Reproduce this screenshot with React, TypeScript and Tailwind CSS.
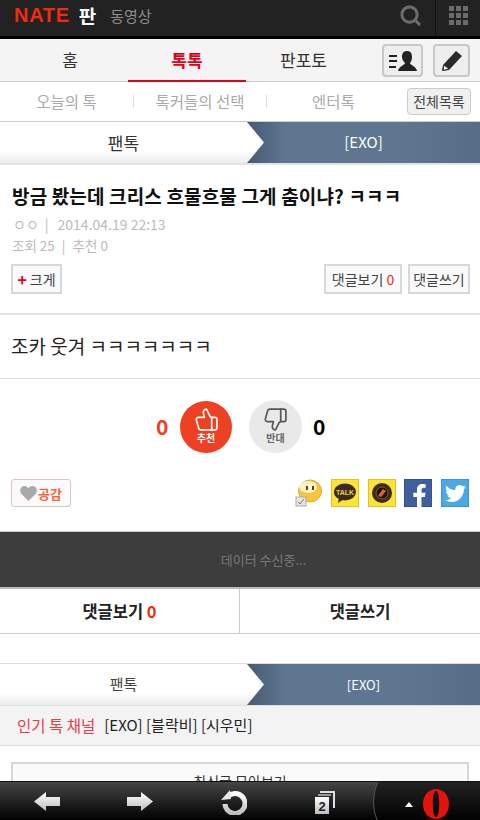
import { ThumbsUp, ThumbsDown, Search } from "lucide-react";
import { FaFacebookF, FaTwitter } from "react-icons/fa";

function Crumb({ big }: { big?: boolean }) {
  return (
    <div className="h-[41px] bg-[linear-gradient(90deg,#465a72_247px,#5f7691_285px,#5f7691_400px,#566c87_480px)] relative flex">
      <div className="w-[264px] pr-[17px] flex items-center justify-center bg-[linear-gradient(180deg,#ffffff_70%,#ececec_100%)] [clip-path:polygon(0_0,247px_0,264px_50%,247px_100%,0_100%)]">
        <span className={big ? "text-[17px] text-[#333]" : "text-[15px] text-[#444]"}>팬톡</span>
      </div>
      <div className="flex-1 flex items-center justify-center">
        <span className={big ? "text-[15px] text-white -ml-[17px]" : "text-[13px] text-white -ml-[17px]"}>[EXO]</span>
      </div>
    </div>
  );
}

function SmallBtn({ children, className }: { children: React.ReactNode; className: string }) {
  return (
    <div className={`h-[30px] border-2 border-[#d8d8d8] bg-[#fafafa] flex items-center justify-center text-[14px] text-[#444] ${className}`}>
      {children}
    </div>
  );
}

function Sep() {
  return <span className="w-px h-[13px] bg-[#dddddd]" />;
}

export default function App() {
  return (
    <div className="relative w-[480px] h-[820px] overflow-hidden bg-white font-['Noto_Sans_CJK_KR','Noto_Sans',sans-serif]">
      <header className="h-[39px] bg-[#222222] border-b-[3px] border-black flex items-center pb-[6px]">
        <span className="ml-[14px] font-['Liberation_Sans',sans-serif] font-bold text-[20px] leading-none tracking-[0.7px] text-[#f02b10]">NATE</span>
        <span className="ml-[9px] text-[19px] font-bold text-white leading-none">판</span>
        <span className="ml-[14px] text-[15px] text-[#8e8e8e] leading-none">동영상</span>
        <Search className="ml-auto mr-[13px] text-[#6b6b6b]" size={23} strokeWidth={3.2} />
        <div className="self-stretch -mb-[6px] w-px bg-[#111]" />
        <div className="ml-[13px] mr-[12px] grid grid-cols-3 gap-[2px]">
          {Array.from({ length: 9 }).map((_, i) => (
            <span key={i} className="w-[5px] h-[5px] bg-[#6b6b6b]" />
          ))}
        </div>
      </header>

      <nav className="h-[43px] bg-[#f4f4f4] border-b border-[#cccccc] flex items-stretch pl-[12px] relative">
        <div className="w-[116px] flex items-center justify-center text-[17px] text-[#333]">홈</div>
        <div className="w-[118px] flex items-center justify-center text-[17px] font-bold text-[#e60012] border-b-[2px] border-[#e60012] -mb-px">톡톡</div>
        <div className="w-[115px] flex items-center justify-center text-[17px] text-[#333]">판포토</div>
        <div className="ml-[21px] mt-[5px] w-[41px] h-[33px] rounded-[4px] border-2 border-[#c8c8c8] bg-[#eeeeee] flex items-center justify-center">
          <svg width="30" height="22" viewBox="0 0 30 22">
            <path d="M1 5h8v2H1zM1 10h8v2H1zM1 16h7v2H1z" fill="#222" />
            <path d="M19 1c4 0 5 3 5 6 0 3-1 5-2 6 0 2 6 3 7 8H10c1-5 7-6 7-8-1-1-3-3-3-6 0-3 1-6 5-6z" fill="#222" />
          </svg>
        </div>
        <div className="ml-[10px] mt-[5px] w-[37px] h-[33px] rounded-[4px] border-2 border-[#c8c8c8] bg-[#eeeeee] flex items-center justify-center">
          <svg width="24" height="24" viewBox="0 0 24 24">
            <path d="M16 2l6 5-13 14-7 1 1-6z" fill="#2a2a2a" />
            <path d="M4 16l5 4-6 1.500z" fill="#ffffff" stroke="#2a2a2a" strokeWidth="1" />
          </svg>
        </div>
      </nav>

      <div className="h-[40px] border-b border-[#cccccc] flex items-center text-[15.5px] text-[#aaaaaa] relative">
        <div className="w-[133px] text-center">오늘의 톡</div>
        <Sep />
        <div className="w-[132px] text-center">톡커들의 선택</div>
        <Sep />
        <div className="w-[133px] text-center">엔터톡</div>
        <div className="ml-[7px] w-[64px] h-[27px] rounded-[4px] border border-[#cccccc] bg-[#f0f0f0] flex items-center justify-center text-[14px] text-[#444]">전체목록</div>
      </div>

      <Crumb big />
      <div className="h-[2px] bg-[#e4e4e4]" />

      <section className="h-[150px] border-b-2 border-[#e2e2e2] px-[11px] pt-[18px]">
        <h1 className="ml-px text-[19px] leading-[26px] font-bold tracking-[0.15px] text-[#111] whitespace-nowrap">방금 봤는데 크리스 흐물흐물 그게 춤이냐? ㅋㅋㅋ</h1>
        <div className="mt-[4px] h-[22px] flex items-center text-[14px] text-[#bbbbbb]">
          <span className="ml-[2px]">ㅇㅇ</span>
          <span className="ml-[6px]">|</span>
          <span className="ml-[9px]">2014.04.19 22:13</span>
        </div>
        <div className="h-[21px] flex items-center text-[13.5px] text-[#bbbbbb]">
          <span className="ml-px">조회 25</span>
          <span className="ml-[7px]">|</span>
          <span className="ml-[7px]">추천 0</span>
        </div>
        <div className="mt-[8px] flex">
          <SmallBtn className="w-[51px]">
            <span className="text-[#e60012] font-bold text-[16px] leading-none mr-[3px]">+</span>크게
          </SmallBtn>
          <SmallBtn className="ml-auto w-[78px]">
            댓글보기&nbsp;<span className="text-[#f02b10]">0</span>
          </SmallBtn>
          <SmallBtn className="ml-[6px] w-[62px] mr-[-1px]">댓글쓰기</SmallBtn>
        </div>
      </section>

      <section className="h-[64px] border-b border-[#dddddd] px-[11px] flex items-center text-[19px] text-[#222]">
        조카 웃겨 ㅋㅋㅋㅋㅋㅋㅋ
      </section>

      <section className="h-[153px] border-b border-[#cccccc] px-[11px] pt-[21px]">
        <div className="flex items-center h-[53px]">
          <span className="ml-[145px] w-[24px] text-[21px] font-bold text-[#f0401f]">0</span>
          <div className="w-[52px] h-[52px] rounded-full bg-[#ee4023] flex flex-col items-center justify-center text-white">
            <ThumbsUp size={25} strokeWidth={1.6} className="-scale-x-100 -mt-[2px]" />
            <span className="text-[10px] font-bold leading-[12px]">추천</span>
          </div>
          <div className="ml-[17px] w-[53px] h-[53px] rounded-full bg-[#e9e9e9] flex flex-col items-center justify-center text-[#555]">
            <ThumbsDown size={25} strokeWidth={1.6} className="-mt-[2px]" />
            <span className="text-[10px] font-bold leading-[12px] text-[#666]">반대</span>
          </div>
          <span className="ml-[11px] text-[21px] font-bold text-black">0</span>
        </div>
        <div className="mt-[26px] flex items-center">
          <div className="w-[60px] h-[28px] rounded-[3px] border border-[#dcc6bd] bg-[#fafafa] flex items-center justify-center gap-[1px]">
            <svg width="17" height="15" viewBox="0 0 17 15">
              <path d="M8.500 15L1 7.500C-1 4 1 0 4.500 0c2 0 3.200 1 4 2.500C9.300 1 10.500 0 12.500 0 16 0 18 4 16 7.500z" fill="#a9a9a9" />
            </svg>
            <span className="text-[13px] font-bold text-[#f4683c] leading-none">공감</span>
          </div>
          <svg className="ml-auto" width="27" height="28" viewBox="0 0 27 28">
            <ellipse cx="15" cy="12" rx="11.500" ry="11" fill="#f6c53d" stroke="#e5a92a" />
            <ellipse cx="13" cy="8" rx="9" ry="6" fill="#fff3c4" />
            <rect x="11" y="7" width="2" height="4" fill="#5a4520" />
            <rect x="17" y="7" width="2" height="4" fill="#5a4520" />
            <rect x="1" y="18" width="10" height="9" fill="#e6e6e6" stroke="#aaa" />
            <path d="M3 23l2 2 4-5" stroke="#777" fill="none" />
          </svg>
          <div className="ml-[9px] w-[28px] h-[28px] bg-[#fde42f] border border-[#e0bf3a] flex items-center justify-center">
            <svg width="24" height="22" viewBox="0 0 24 22">
              <ellipse cx="12" cy="10" rx="11" ry="8.500" fill="#3b2a20" />
              <path d="M6 15l-1 6 6-4z" fill="#3b2a20" />
              <text x="12" y="12.500" textAnchor="middle" fontSize="7" fontWeight="700" fill="#f5d13a" fontFamily="Liberation Sans">TALK</text>
            </svg>
          </div>
          <div className="ml-[9px] w-[28px] h-[28px] bg-[#fde42f] border border-[#e0bf3a] flex items-center justify-center">
            <svg width="22" height="22" viewBox="0 0 22 22">
              <circle cx="11" cy="11" r="10" fill="#3a2a20" />
              <circle cx="11" cy="11" r="6" fill="#1a1210" stroke="#8a5a20" />
              <path d="M7 14l5-7 3 2-5 6z" fill="#e8641c" />
            </svg>
          </div>
          <div className="ml-[8px] w-[28px] h-[28px] bg-[#3f5f9f] border border-[#35528c] flex items-end justify-center">
            <FaFacebookF size={23} className="text-white -mb-px ml-[3px]" />
          </div>
          <div className="ml-[9px] w-[28px] h-[28px] bg-[#4aa8e4] border border-[#3e94cd] flex items-center justify-center">
            <FaTwitter size={21} className="text-white" />
          </div>
        </div>
      </section>

      <div className="h-[57px] bg-[#3d3d3d] border-b-2 border-[#bbbbbb] flex items-center justify-center pl-[47px] text-[13px] text-[#777777]">
        데이터 수신중...
      </div>
      <div className="h-[45px] border-b border-[#cccccc] flex text-[16.5px] font-bold text-[#222]">
        <div className="w-[240px] border-r border-[#cccccc] flex items-center justify-center">
          댓글보기&nbsp;<span className="text-[#f02b10]">0</span>
        </div>
        <div className="flex-1 flex items-center justify-center">댓글쓰기</div>
      </div>
      <div className="h-[30px] border-b border-[#dddddd]" />
      <Crumb />
      <div className="h-[41px] bg-[#f3f3f3] border-t border-b border-[#e0e0e0] flex items-center text-[15.5px]">
        <span className="ml-[17px] text-[#ee3a44]">인기 톡 채널</span>
        <span className="ml-[9px] text-[#222] text-[15px]">[EXO] [블락비] [시우민]</span>
      </div>
      <div className="mt-[16px] mx-[11px] h-[44px] pb-[5px] border-2 border-[#d8d8d8] bg-[#fafafa] flex items-center justify-center text-[14px] text-[#333]">
        최신글 모아보기
      </div>

      <footer className="absolute left-0 right-0 bottom-0 h-[39px] border-t border-[#111] bg-[linear-gradient(180deg,#454545_0%,#2a2a2a_40%,#000000_100%)] overflow-hidden">
        <svg className="absolute left-[34px] top-[10px]" width="26" height="19" viewBox="0 0 26 19">
          <defs>
            <linearGradient id="g" x1="0" y1="0" x2="0" y2="1">
              <stop offset="0" stopColor="#ffffff" />
              <stop offset="1" stopColor="#bdbdbd" />
            </linearGradient>
          </defs>
          <path d="M0 9.500L12 0v5h14v9H12v5z" fill="url(#g)" />
        </svg>
        <svg className="absolute left-[127px] top-[10px]" width="26" height="19" viewBox="0 0 26 19">
          <path d="M26 9.500L14 0v5H0v9h14v5z" fill="url(#g)" />
        </svg>
        <svg className="absolute left-[221px] top-[7px]" width="26" height="26" viewBox="0 0 26 26">
          <path d="M8 6.500A10 10 0 1 1 4 15" fill="none" stroke="url(#g)" strokeWidth="5" />
          <path d="M0 11l10-1-1-9z" fill="#e8e8e8" />
        </svg>
        <svg className="absolute left-[315px] top-[9px]" width="20" height="24" viewBox="0 0 20 24">
          <path d="M5 0h15v17h-2V2H5z" fill="#e0e0e0" />
          <path d="M3 3h13v2H3z" fill="#999" />
          <rect x="0" y="6" width="14" height="17" fill="url(#g)" />
          <text x="7" y="20" textAnchor="middle" fontSize="13" fontWeight="700" fill="#222" fontFamily="Liberation Sans">2</text>
        </svg>
        <div className="absolute left-[373px] -top-[30px] w-[140px] h-[100px] rounded-full border border-[#555] bg-[linear-gradient(180deg,#222_30%,#000_70%)]" />
        <svg className="absolute left-[405px] top-[20px]" width="8" height="5" viewBox="0 0 8 5">
          <path d="M4 0l4 5H0z" fill="#fff" />
        </svg>
        <svg className="absolute left-[423px] top-[7px]" width="26" height="30" viewBox="0 0 26 30">
          <path fillRule="evenodd" d="M13 0c7.500 0 13 6.500 13 15s-5.500 15-13 15S0 23.500 0 15 5.500 0 13 0zm0 2c-2 0-3.200 5.500-3.200 13s1.200 13 3.200 13 3.200-5.500 3.200-13-1.200-13-3.200-13z" fill="#e3120b" />
        </svg>
      </footer>
    </div>
  );
}
